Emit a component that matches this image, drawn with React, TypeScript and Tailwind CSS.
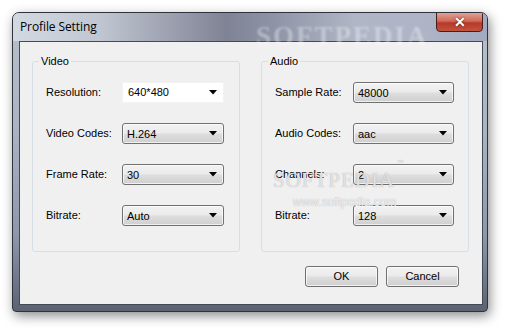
import React from "react";

type Row = { label: string; value: string; editable?: boolean };

const videoRows: Row[] = [
  { label: "Resolution:", value: "640*480", editable: true },
  { label: "Video Codes:", value: "H.264" },
  { label: "Frame Rate:", value: "30" },
  { label: "Bitrate:", value: "Auto" },
];

const audioRows: Row[] = [
  { label: "Sample Rate:", value: "48000" },
  { label: "Audio Codes:", value: "aac" },
  { label: "Channels:", value: "2" },
  { label: "Bitrate:", value: "128" },
];

function Arrow() {
  return (
    <svg width="8" height="5" viewBox="0 0 8 5" className="shrink-0">
      <path d="M0 0H8L4 4.5Z" fill="#000" />
    </svg>
  );
}

function Combo({ value, editable, width }: { value: string; editable?: boolean; width: string }) {
  if (editable) {
    return (
      <div className={`${width} h-[21px] flex items-center justify-between pl-[5px] pr-[6px] bg-white border border-[#f3f3f3]`}>
        <span>{value}</span>
        <Arrow />
      </div>
    );
  }
  return (
    <div
      className={`${width} h-[21px] flex items-center justify-between pl-[4px] pr-[6px] rounded-[3px] border border-[#707070] bg-[linear-gradient(180deg,#f2f2f2_0%,#ebebeb_45%,#dddddd_55%,#cfcfcf_100%)] shadow-[inset_0_0_0_1px_rgba(255,255,255,0.7)]`}
    >
      <span className="pt-[2px]">{value}</span>
      <Arrow />
    </div>
  );
}

function Group({
  title,
  rows,
  labelWidth,
  comboWidth,
}: {
  title: string;
  rows: Row[];
  labelWidth: string;
  comboWidth: string;
}) {
  return (
    <div className="relative w-[208px] h-[191px] rounded-[3px] border border-[#d5dfe5] pt-[20px] pl-[13px]">
      <span className="absolute -top-[8px] left-[6px] px-[2px] bg-[#f0f0f0] leading-[14px]">{title}</span>
      <div className="flex flex-col gap-[20px]">
        {rows.map((r) => (
          <div key={r.label} className="flex items-center h-[21px]">
            <span className={labelWidth}>{r.label}</span>
            <Combo value={r.value} editable={r.editable} width={comboWidth} />
          </div>
        ))}
      </div>
    </div>
  );
}

function Button({ children }: { children: React.ReactNode }) {
  return (
    <button className="w-[73px] h-[21px] rounded-[3px] border border-[#707070] bg-[linear-gradient(180deg,#f2f2f2_0%,#ebebeb_45%,#dddddd_55%,#cfcfcf_100%)] shadow-[inset_0_0_0_1px_rgba(255,255,255,0.7)] text-black leading-none">
      {children}
    </button>
  );
}

export default function App() {
  return (
    <div className="w-[509px] h-[332px] bg-white pt-[12px] pl-[12px] font-['Liberation_Sans',Arial,sans-serif] text-[11px] text-black">
      <div className="relative w-[476px] h-[300px] rounded-t-[7px] rounded-b-[4px] border border-[#2f333b] shadow-[2px_4px_12px_rgba(0,0,0,0.45)] flex flex-col bg-[linear-gradient(180deg,#b8c0cc_0%,#a9b3c2_40%,#8c97aa_75%,#5b6272_100%)] overflow-hidden">
        {/* title bar */}
        <div className="h-[28px] flex items-start justify-between pl-[7px] pr-[4px] bg-[linear-gradient(90deg,#d3d9e1_0%,#c1c7d2_18%,#9fa3b2_32%,#7f8395_45%,#8e93a6_55%,#b1b6c6_72%,#aeb4c6_88%,#a2aac0_100%)]">
          <span className="mt-[7px] text-[12px] leading-[14px] font-['Open_Sans','Liberation_Sans',sans-serif] tracking-[-0.1px]">
            Profile Setting
          </span>
          <div className="w-[47px] h-[20px] -mt-[1px] rounded-b-[4px] border border-[#4a1d18] bg-[linear-gradient(180deg,#e0a395_0%,#cf6a58_45%,#b8382a_55%,#c1533f_100%)] flex items-center justify-center">
            <span className="text-white font-bold text-[14px] leading-none [text-shadow:0_0_2px_#3a0d08]">✕</span>
          </div>
        </div>

        {/* client area */}
        <div className="ml-[6px] w-[464px] h-[264px] border border-[#444a55] bg-[#f0f0f0] pl-[12px] pt-[19px]">
          <div className="flex gap-[21px]">
            <Group title="Video" rows={videoRows} labelWidth="w-[76px]" comboWidth="w-[102px]" />
            <Group title="Audio" rows={audioRows} labelWidth="w-[78px]" comboWidth="w-[101px]" />
          </div>
          <div className="flex justify-end gap-[8px] mt-[14px] pr-[23px]">
            <Button>OK</Button>
            <Button>Cancel</Button>
          </div>
        </div>

        {/* watermarks */}
        <span className="pointer-events-none absolute left-[243px] top-[3px] text-[27px] font-bold tracking-[2px] font-['Liberation_Serif',serif] text-white/35 blur-[1px]">
          SOFTPEDIA
        </span>
        <span className="pointer-events-none absolute left-[260px] top-[152px] text-[21px] font-['Liberation_Serif',serif] tracking-[1px] text-white/70 [text-shadow:0_0_1px_#9a9a9a]">
          SOFTPEDIA
          <sup className="text-[6px] align-top ml-[2px]">™</sup>
        </span>
        <span className="pointer-events-none absolute left-[280px] top-[183px] text-[12px] leading-[12px] font-['Liberation_Sans',sans-serif] text-white/80 [text-shadow:0_0_1px_#999]">
          www.softpedia.com
        </span>
      </div>
    </div>
  );
}
